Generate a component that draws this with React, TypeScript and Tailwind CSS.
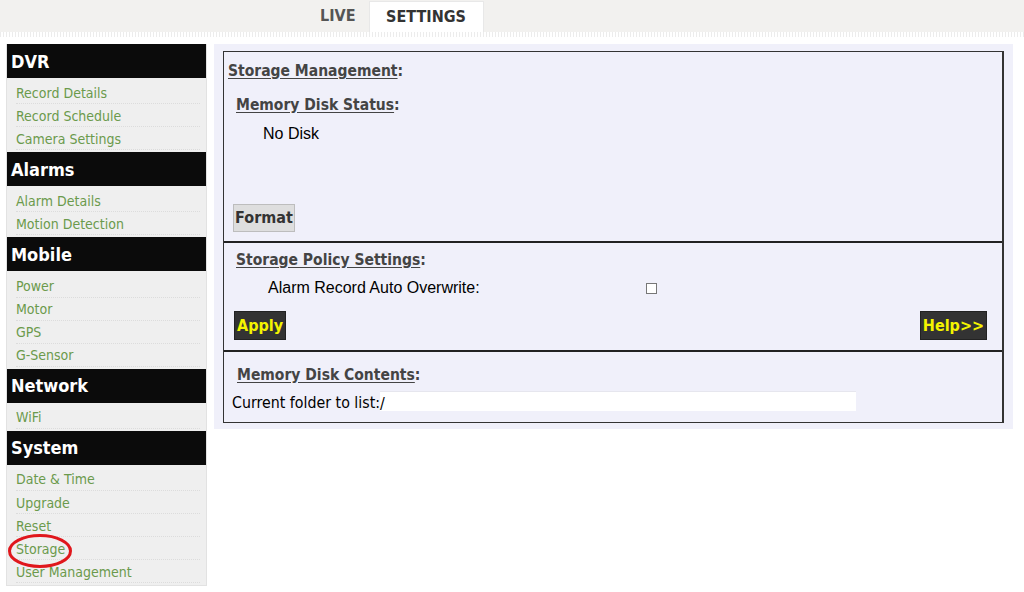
import React from "react";

const tahoma = { fontFamily: 'Tahoma, "DejaVu Sans Condensed", "DejaVu Sans", sans-serif' };
const arial = { fontFamily: '"Liberation Sans", Arial, sans-serif' };

const groups: { title: string; items: string[] }[] = [
  { title: "DVR", items: ["Record Details", "Record Schedule", "Camera Settings"] },
  { title: "Alarms", items: ["Alarm Details", "Motion Detection"] },
  { title: "Mobile", items: ["Power", "Motor", "GPS", "G-Sensor"] },
  { title: "Network", items: ["WiFi"] },
  { title: "System", items: ["Date & Time", "Upgrade", "Reset", "Storage", "User Management"] },
];

function Heading({ text, className }: { text: string; className?: string }) {
  return (
    <div className={"text-[15.5px] font-bold text-[#444] leading-[20px] " + (className ?? "")}>
      <span className="underline underline-offset-2">{text}</span>
      <span>:</span>
    </div>
  );
}

function YellowButton({ label }: { label: string }) {
  return (
    <button className="h-[29px] px-[2px] bg-[#333] border border-[#222] text-[16px] font-bold text-[#f4f400] flex items-center justify-center">
      {label}
    </button>
  );
}

export default function App() {
  return (
    <div className="w-[1024px] h-[592px] bg-white overflow-hidden" style={tahoma}>
      {/* top bar */}
      <div className="h-[32px] bg-[#f2f1ef] flex items-end pl-[320px] gap-[13px]">
        <div className="h-[32px] flex items-center text-[16px] font-bold text-[#555]">LIVE</div>
        <div className="h-[31px] w-[115px] bg-white border border-b-0 border-[#e8e8e8] flex items-center justify-center text-[16px] font-bold text-[#333]">
          SETTINGS
        </div>
      </div>
      <div
        className="h-[5px]"
        style={{
          backgroundImage: "repeating-linear-gradient(90deg, #ececec 0 1px, #ffffff 1px 3px)",
        }}
      />
      <div className="flex items-start pt-[7px] pl-[6px] gap-[7px]">
        {/* sidebar */}
        <div className="w-[201px] bg-[#efefef] border border-[#e2e2e2] border-t-0 relative">
          {groups.map((g) => (
            <div key={g.title}>
              <div className="h-[34px] bg-[#0b0b0b] text-white text-[18px] font-bold flex items-center pl-[4px]">
                {g.title}
              </div>
              <div className="pt-[3px] pb-[2px]">
                {g.items.map((it) => (
                  <div
                    key={it}
                    className="h-[23.1px] ml-[9px] mr-[6px] flex items-center pt-[2px] text-[14px] text-[#6b9a4c] border-b border-dotted border-[#dcdcdc]"
                  >
                    {it}
                  </div>
                ))}
              </div>
            </div>
          ))}
          <svg
            className="absolute left-[0px] top-[489px]"
            width="66"
            height="36"
            viewBox="0 0 66 36"
          >
            <ellipse cx="33" cy="18" rx="30.5" ry="15.5" fill="none" stroke="#e0171c" strokeWidth="3" />
          </svg>
        </div>

        {/* main */}
        <div className="w-[799px] h-[385px] bg-[#f0f0fa] pt-[7px] pl-[9px]">
          <div className="w-[781px] border border-[#333] border-r-2 bg-[#f0f0fa] flex flex-col">
            {/* section 1 */}
            <div className="h-[191px] border-b-2 border-[#222] flex flex-col items-start pt-[9px] pl-[4px]">
              <Heading text="Storage Management" />
              <Heading text="Memory Disk Status" className="mt-[14px] ml-[8px]" />
              <div className="mt-[9px] ml-[35px] text-[16px] leading-[20px] text-black" style={arial}>
                No Disk
              </div>
              <button className="mt-[60px] ml-[5px] h-[28px] w-[62px] bg-[#dedede] border border-[#bdbdbd] text-[16px] font-bold text-[#333] flex items-center justify-center">
                Format
              </button>
            </div>
            {/* section 2 */}
            <div className="h-[109px] border-b-2 border-[#222] flex flex-col pt-[7px] pl-[12px] pr-[15px]">
              <Heading text="Storage Policy Settings" />
              <div className="mt-[8px] ml-[32px] flex items-center h-[20px]">
                <span className="w-[378px] text-[16px] leading-[20px] text-black" style={arial}>
                  Alarm Record Auto Overwrite:
                </span>
                <span className="w-[11px] h-[11px] bg-white border border-[#777]" />
              </div>
              <div className="mt-[13px] -ml-[2px] flex justify-between">
                <YellowButton label="Apply" />
                <YellowButton label="Help>>" />
              </div>
            </div>
            {/* section 3 */}
            <div className="h-[70px] flex flex-col pt-[13px] pl-[8px]">
              <Heading text="Memory Disk Contents" className="ml-[5px]" />
              <div className="mt-[6px] flex items-start h-[24px]">
                <span className="mt-[2px] text-[15.8px] leading-[20px] text-black whitespace-nowrap">Current folder to list:</span>
                <div className="w-[476px] h-[20px] bg-white border-t border-[#e6e6ee] text-[15.8px] leading-[20px] pt-[2px] text-black overflow-visible">
                  /
                </div>
              </div>
            </div>
          </div>
        </div>
      </div>
    </div>
  );
}
